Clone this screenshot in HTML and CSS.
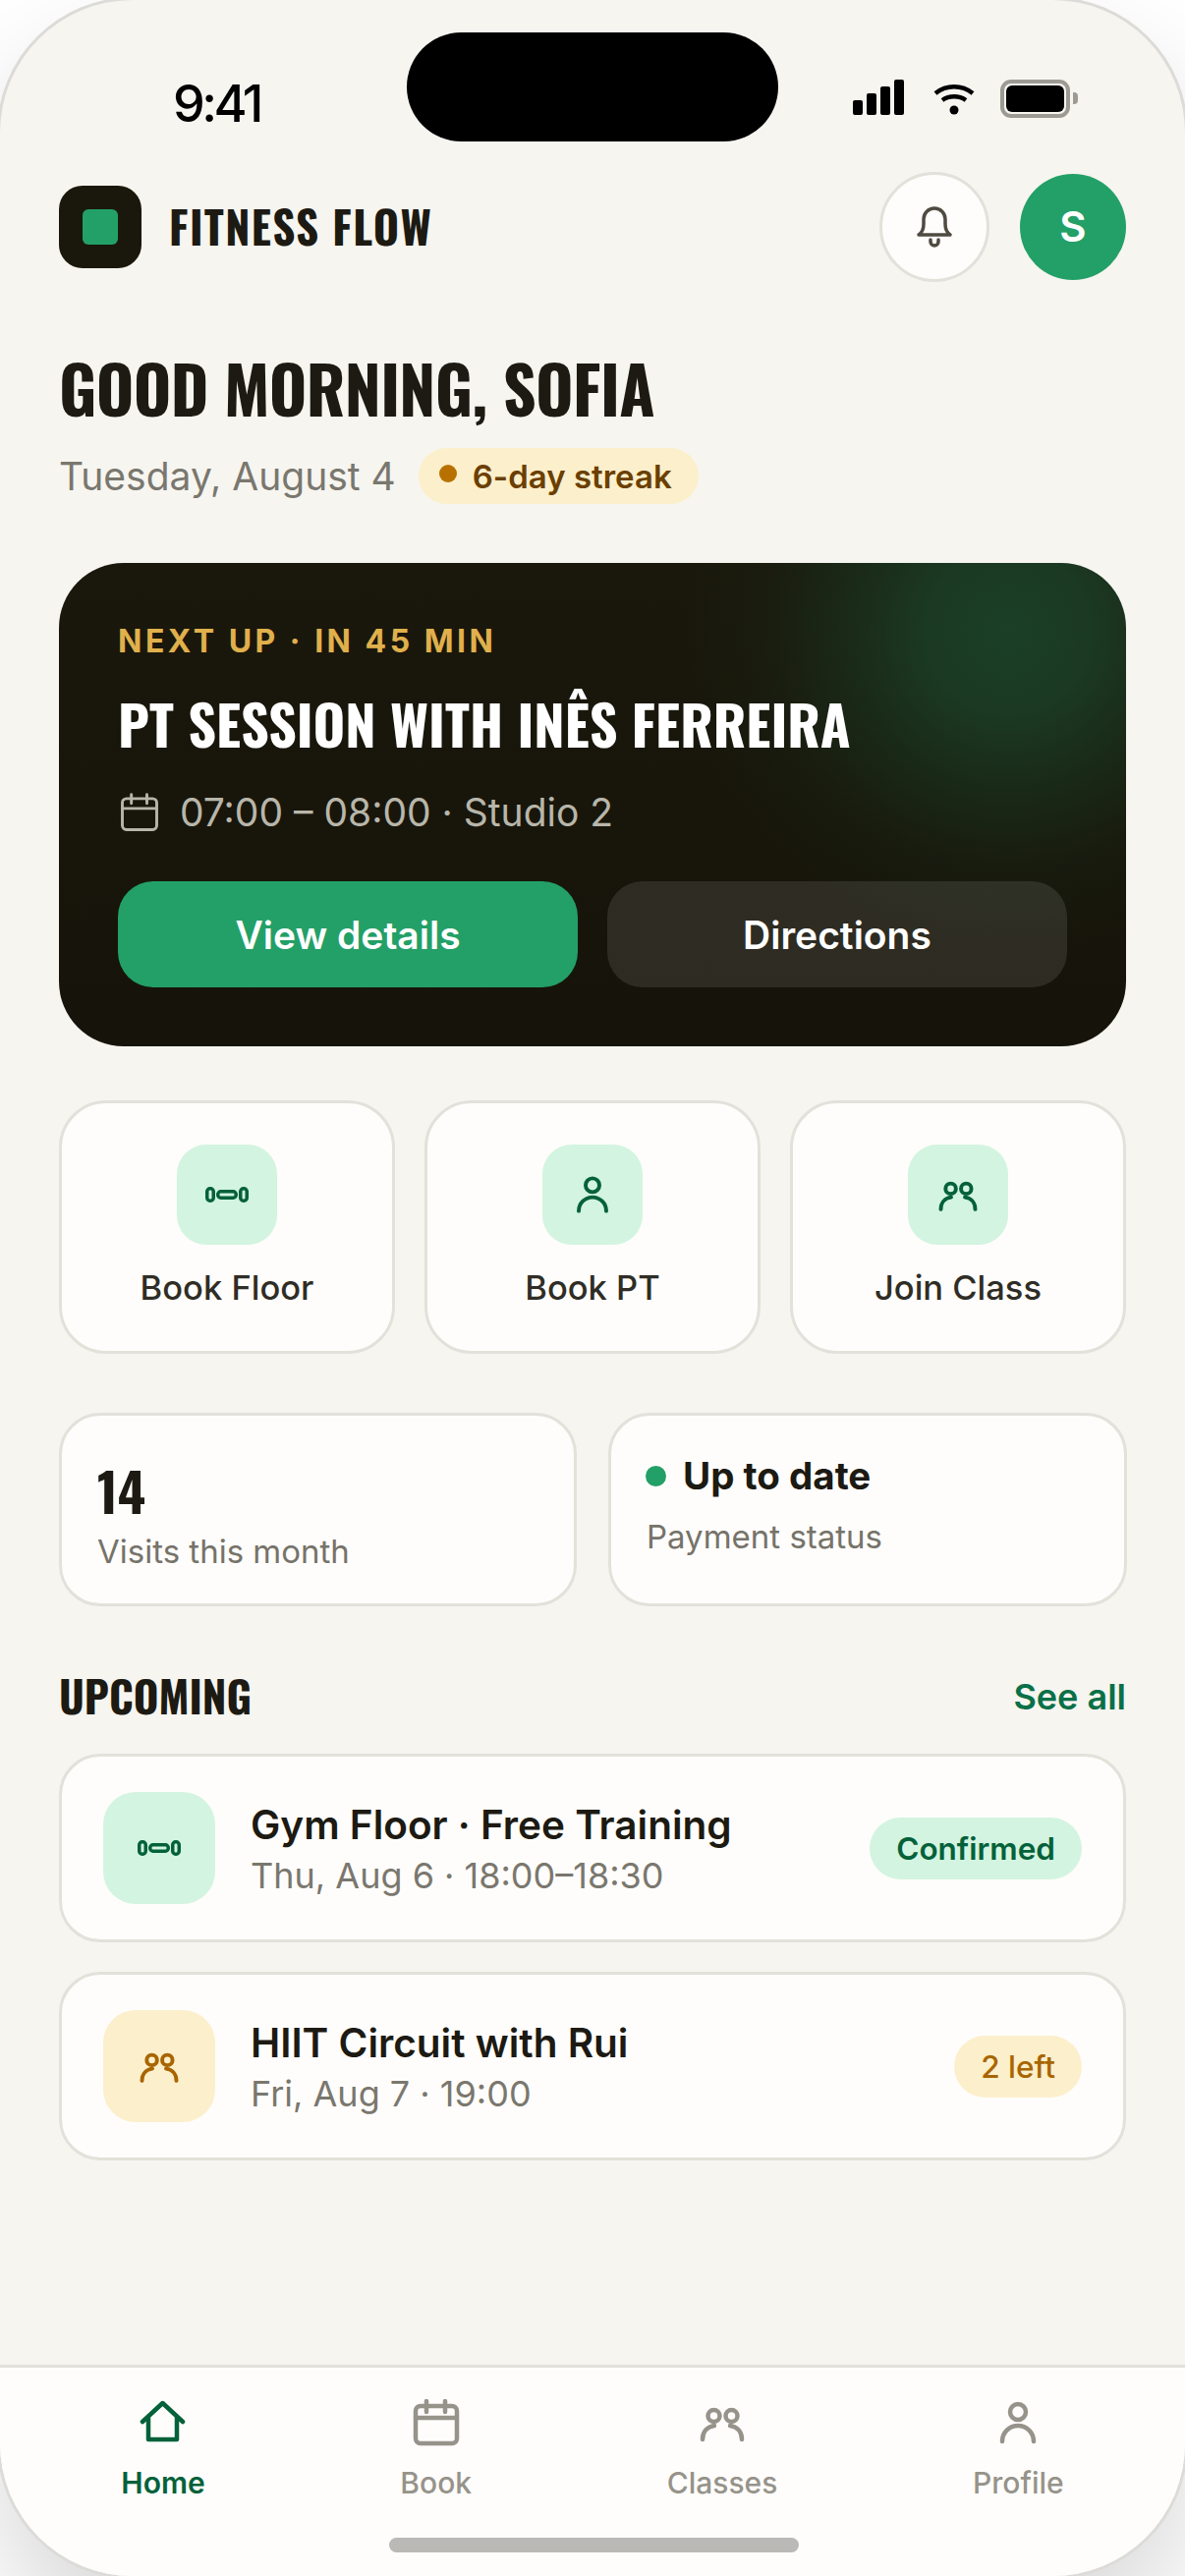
FILE: index.html
```html
<!DOCTYPE html>
<html lang="en">
<head>
    <meta charset="UTF-8">
    <meta name="viewport" content="width=device-width, initial-scale=1.0">
    <title>Fitness Flow</title>
    <link rel="stylesheet" href="styles.css">
</head>
<body>

<svg class="sprite" width="0" height="0">
    <symbol id="i-cal" viewBox="0 0 48 48"><rect x="3" y="7" width="42" height="38" rx="5"/><path d="M3 19h42M14 2v11M33 2v11"/></symbol>
    <symbol id="i-person" viewBox="0 0 48 48"><circle cx="24" cy="13" r="8"/><path d="M8 43a16 16 0 0 1 32 0"/></symbol>
    <symbol id="i-group" viewBox="0 0 48 48"><circle cx="15.5" cy="17" r="6"/><circle cx="33.5" cy="17" r="6"/><path d="M4 41c0-8 5-13 12-14M44 41c0-8-5-13-12-14"/></symbol>
    <symbol id="i-bell" viewBox="0 0 48 48"><path d="M8 32c3-2 5-6 5-11v-5a11 11 0 0 1 22 0v5c0 5 2 9 5 11z"/><path d="M20 37v2a4 4 0 0 0 8 0v-2"/></symbol>
    <symbol id="i-weight" viewBox="0 0 48 48"><g stroke-width="3.5"><rect x="3.750" y="17.750" width="6.500" height="12.500" rx="3"/><rect x="14.750" y="20.750" width="18.500" height="6.500" rx="3"/><rect x="37.750" y="17.750" width="6.500" height="12.500" rx="3"/></g></symbol>
    <symbol id="i-home" viewBox="0 0 48 48"><path d="M3 23L23.500 4 44 23"/><path d="M9 19v22h29V19"/></symbol>
</svg>

<div class="phone">
    <div class="status">
        <span class="time">9:41</span>
        <div class="island"></div>
        <div class="status-icons">
            <div class="signal"><i></i><i></i><i></i><i></i></div>
            <svg class="wifi" width="42" height="32" viewBox="0 0 42 32"><path d="M2 10c11-9 27-9 38 0M9 17c7-5 17-5 24 0" fill="none" stroke="#000" stroke-width="4.500"/><circle cx="21" cy="27" r="4.500"/></svg>
            <div class="battery"><div class="battery-fill"></div></div>
            <div class="battery-nub"></div>
        </div>
    </div>

    <div class="content">
        <header class="top">
            <div class="logo"><div class="logo-mark"></div></div>
            <span class="brand display">FITNESS FLOW</span>
            <button class="bell"><svg class="ic"><use href="#i-bell"/></svg></button>
            <div class="avatar">S</div>
        </header>

        <h1 class="greeting display">GOOD MORNING, SOFIA</h1>
        <div class="date-row">
            <span class="date">Tuesday, August 4</span>
            <span class="streak"><i class="dot"></i>6-day streak</span>
        </div>

        <section class="hero">
            <div class="eyebrow">NEXT UP · IN 45 MIN</div>
            <h2 class="hero-title display">PT SESSION WITH INÊS FERREIRA</h2>
            <div class="hero-meta"><svg class="ic"><use href="#i-cal"/></svg>07:00 – 08:00 · Studio 2</div>
            <div class="hero-actions">
                <button class="btn btn-primary">View details</button>
                <button class="btn btn-ghost">Directions</button>
            </div>
        </section>

        <section class="quick">
            <div class="quick-card"><div class="tile"><svg class="ic ic-weight"><use href="#i-weight"/></svg></div>Book Floor</div>
            <div class="quick-card"><div class="tile"><svg class="ic"><use href="#i-person"/></svg></div>Book PT</div>
            <div class="quick-card"><div class="tile"><svg class="ic"><use href="#i-group"/></svg></div>Join Class</div>
        </section>

        <section class="stats">
            <div class="stat">
                <div class="stat-num display">14</div>
                <div class="stat-label">Visits this month</div>
            </div>
            <div class="stat stat-pay">
                <div class="stat-status"><i class="dot"></i>Up to date</div>
                <div class="stat-label">Payment status</div>
            </div>
        </section>

        <div class="section-head">
            <h3 class="display">UPCOMING</h3>
            <a class="see-all">See all</a>
        </div>

        <div class="list">
            <div class="row">
                <div class="row-icon"><svg class="ic ic-weight"><use href="#i-weight"/></svg></div>
                <div class="row-text">
                    <div class="row-title">Gym Floor · Free Training</div>
                    <div class="row-sub">Thu, Aug 6 · 18:00–18:30</div>
                </div>
                <span class="tag">Confirmed</span>
            </div>
            <div class="row row-amber">
                <div class="row-icon"><svg class="ic"><use href="#i-group"/></svg></div>
                <div class="row-text">
                    <div class="row-title">HIIT Circuit with Rui</div>
                    <div class="row-sub">Fri, Aug 7 · 19:00</div>
                </div>
                <span class="tag">2 left</span>
            </div>
        </div>
    </div>

    <nav class="tabs">
        <a class="tab active"><svg class="ic"><use href="#i-home"/></svg>Home</a>
        <a class="tab"><svg class="ic"><use href="#i-cal"/></svg>Book</a>
        <a class="tab"><svg class="ic"><use href="#i-group"/></svg>Classes</a>
        <a class="tab"><svg class="ic"><use href="#i-person"/></svg>Profile</a>
        <div class="home-bar"></div>
    </nav>
</div>

</body>
</html>
```

FILE: styles.css
```css
* {
    box-sizing: border-box;
}
body {
    margin: 0;
    background-color: #fff;
    font-family: Inter, "Noto Sans", sans-serif;
    color: #1c1a12;
    overflow: hidden;
}
h1, h2, h3 {
    margin: 0;
    font-weight: 700;
}
i {
    display: block;
}
button {
    font-family: inherit;
    border: none;
    padding: 0;
}
.sprite {
    position: absolute;
}
.display {
    font-family: Oswald, "Liberation Sans Narrow", "Roboto Condensed", "Liberation Sans", sans-serif;
    font-weight: 700;
}
.ic {
    fill: none;
    stroke: currentColor;
    stroke-width: 4;
    stroke-linecap: round;
    stroke-linejoin: round;
    display: block;
    flex-shrink: 0;
}

.phone {
    position: relative;
    width: 1206px;
    height: 2622px;
    display: flex;
    flex-direction: column;
    background-color: #f6f5f0;
    border-radius: 135px;
    box-shadow: 0 0 0 3px #dcdbd8, 0 60px 120px rgba(0, 0, 0, 0.16);
}

/* status bar */
.status {
    height: 174px;
    flex-shrink: 0;
    display: flex;
    justify-content: space-between;
    padding: 81px 109px 0 176px;
}
.time {
    font-size: 52px;
    font-weight: 500;
    letter-spacing: -3.5px;
    line-height: 49px;
    color: #000;
}
.island {
    position: absolute;
    left: 414px;
    top: 33px;
    width: 378px;
    height: 111px;
    background-color: #000;
    border-radius: 56px;
}
.status-icons {
    display: flex;
    align-items: flex-start;
    height: 39px;
}
.signal {
    display: flex;
    align-items: flex-end;
    gap: 4px;
    height: 36px;
    margin-right: 30px;
}
.signal i {
    width: 10px;
    background-color: #000;
    border-radius: 2px;
}
.signal i:nth-child(1) { height: 15px; }
.signal i:nth-child(2) { height: 22px; }
.signal i:nth-child(3) { height: 29px; }
.signal i:nth-child(4) { height: 36px; }
.wifi {
    margin-top: 4px;
    margin-right: 26px;
}
.battery {
    width: 71px;
    height: 39px;
    border: 4px solid #9c9a92;
    border-radius: 11px;
    padding: 2px;
}
.battery-fill {
    height: 100%;
    background-color: #000;
    border-radius: 6px;
}
.battery-nub {
    width: 5px;
    height: 12px;
    margin: 13px 0 0 3px;
    background-color: #9c9a92;
    border-radius: 0 4px 4px 0;
}

.content {
    flex: 1;
    padding: 0 60px;
}

/* header */
.top {
    display: flex;
    align-items: center;
    height: 113px;
}
.logo {
    width: 84px;
    height: 84px;
    background-color: #1a180c;
    border-radius: 24px;
    display: flex;
    align-items: center;
    justify-content: center;
}
.logo-mark {
    width: 36px;
    height: 36px;
    background-color: #23a067;
    border-radius: 6px;
}
.brand {
    margin: -2px 0 0 28px;
    font-size: 45px;
    letter-spacing: 1.35px;
    color: #1c1a12;
    flex: 1;
}
.bell {
    width: 112px;
    height: 112px;
    margin-right: 31px;
    background-color: #fefdfb;
    border: 3px solid #e2e1da;
    border-radius: 50%;
    color: #4f4b42;
    display: flex;
    align-items: center;
    justify-content: center;
}
.bell .ic {
    width: 48px;
    height: 48px;
    stroke-width: 3.5;
}
.avatar {
    width: 108px;
    height: 108px;
    background-color: #23a067;
    border-radius: 50%;
    color: #fff;
    font-size: 42px;
    font-weight: 600;
    display: flex;
    align-items: center;
    justify-content: center;
}

.greeting {
    margin-top: 65px;
    font-size: 66px;
    letter-spacing: -0.66px;
    line-height: 84px;
}
.date-row {
    display: flex;
    align-items: center;
    gap: 23px;
    margin-top: 20px;
}
.date {
    font-size: 39px;
    color: #7a776e;
}
.streak {
    display: flex;
    align-items: center;
    gap: 16px;
    height: 57px;
    padding: 0 27px 0 21px;
    background-color: #fcefcb;
    border-radius: 29px;
    font-size: 33px;
    font-weight: 600;
    color: #6b3f00;
}
.streak .dot {
    width: 18px;
    height: 18px;
    margin-top: -6px;
    background-color: #b87100;
    border-radius: 50%;
}

/* next up card */
.hero {
    margin-top: 60px;
    height: 492px;
    padding: 60px;
    border-radius: 66px;
    background-color: #19170c;
    background-image: radial-gradient(circle 330px at 966px 70px, #1b3f27 0%, rgba(27, 63, 39, 0.85) 25%, rgba(27, 63, 39, 0.45) 50%, rgba(27, 63, 39, 0.12) 75%, rgba(27, 63, 39, 0) 100%), linear-gradient(#1a180c, #16140a);
}
.eyebrow {
    font-size: 32px;
    font-weight: 700;
    letter-spacing: 3.5px;
    line-height: 40px;
    color: #e0b04c;
}
.hero-title {
    margin-top: 24px;
    font-size: 56px;
    line-height: 78px;
    color: #fff;
}
.hero-meta {
    display: flex;
    align-items: center;
    gap: 21px;
    margin-top: 28px;
    font-size: 39px;
    color: #b8b6aa;
}
.hero-meta .ic {
    width: 40px;
    height: 40px;
    margin-left: 2px;
    stroke-width: 3.5;
}
.hero-actions {
    display: flex;
    gap: 30px;
    margin-top: 47px;
}
.btn {
    flex: 1;
    height: 108px;
    border-radius: 36px;
    font-size: 39px;
    font-weight: 600;
    color: #fff;
}
.btn-primary {
    background-color: #23a067;
}
.btn-ghost {
    background-color: rgba(255, 255, 255, 0.1);
}

/* quick actions */
.quick {
    display: grid;
    grid-template-columns: repeat(3, 1fr);
    gap: 30px;
    margin-top: 55px;
}
.quick-card {
    height: 258px;
    padding-top: 42px;
    background-color: #fefdfb;
    border: 3px solid #e2e1da;
    border-radius: 48px;
    display: flex;
    flex-direction: column;
    align-items: center;
    gap: 23px;
    font-size: 34.5px;
    font-weight: 500;
    color: #2f2d25;
}
.tile {
    width: 102px;
    height: 102px;
    background-color: #d3f4e0;
    border-radius: 30px;
    color: #04613a;
    display: flex;
    align-items: center;
    justify-content: center;
}
.tile .ic, .row-icon .ic {
    width: 42px;
    height: 42px;
    stroke-width: 4.5;
}
.tile .ic-weight, .row-icon .ic-weight {
    width: 48px;
    height: 48px;
}

/* stats */
.stats {
    display: grid;
    grid-template-columns: 527px 528px;
    gap: 32px;
    margin-top: 60px;
}
.stat {
    height: 197px;
    padding: 34px 36px 0;
    background-color: #fefdfb;
    border: 3px solid #e2e1da;
    border-radius: 42px;
}
.stat-num {
    font-size: 54px;
    line-height: 84px;
}
.stat-label {
    font-size: 33px;
    color: #76736a;
}
.stat-pay {
    padding: 33px 35px 0;
}
.stat-status {
    display: flex;
    align-items: center;
    gap: 17px;
    font-size: 38.5px;
    font-weight: 700;
    line-height: 56px;
    margin-bottom: 14px;
}
.stat-status .dot {
    width: 21px;
    height: 21px;
    background-color: #23a067;
    border-radius: 50%;
}
.stat-pay .stat-label {
    margin-left: 1px;
}

/* upcoming */
.section-head {
    display: flex;
    align-items: center;
    justify-content: space-between;
    margin-top: 60px;
    height: 60px;
}
.section-head h3 {
    font-size: 44px;
}
.see-all {
    margin-top: 4px;
    font-size: 36px;
    font-weight: 600;
    color: #0a7048;
}
.list {
    display: flex;
    flex-direction: column;
    gap: 30px;
    margin-top: 30px;
}
.row {
    height: 192px;
    padding: 0 42px;
    background-color: #fefdfb;
    border: 3px solid #e2e1da;
    border-radius: 42px;
    display: flex;
    align-items: center;
    gap: 36px;
}
.row-icon {
    width: 114px;
    height: 114px;
    flex-shrink: 0;
    background-color: #d3f4e0;
    border-radius: 33px;
    color: #04613a;
    display: flex;
    align-items: center;
    justify-content: center;
}
.row-amber .row-icon {
    background-color: #fcefcb;
    color: #a86500;
}
.row-text {
    flex: 1;
    padding-top: 3px;
}
.row-title {
    font-size: 40.5px;
    font-weight: 600;
    line-height: 52px;
}
.row-sub {
    font-size: 36px;
    line-height: 50px;
    color: #7a776e;
}
.tag {
    height: 63px;
    padding: 0 27px;
    background-color: #d3f4e0;
    border-radius: 32px;
    font-size: 31.5px;
    font-weight: 600;
    line-height: 63px;
    color: #04613a;
}
.row-amber .tag {
    background-color: #fcefcb;
    color: #a86500;
    font-weight: 500;
}

/* bottom tabs */
.tabs {
    position: relative;
    height: 215px;
    flex-shrink: 0;
    padding: 32px 24px 0;
    background-color: #fefdfb;
    border-top: 3px solid #e2e1da;
    border-radius: 0 0 135px 135px;
    display: flex;
    justify-content: space-around;
    align-items: flex-start;
}
.tab {
    display: flex;
    flex-direction: column;
    align-items: center;
    gap: 19px;
    font-size: 30px;
    font-weight: 500;
    color: #96938a;
}
.tab .ic {
    width: 48px;
    height: 48px;
    stroke-width: 4.5;
}
.tab.active {
    color: #04613a;
    font-weight: 600;
}
.home-bar {
    position: absolute;
    left: 396px;
    bottom: 24px;
    width: 417px;
    height: 15px;
    background-color: #bbb9b5;
    border-radius: 8px;
}
```
